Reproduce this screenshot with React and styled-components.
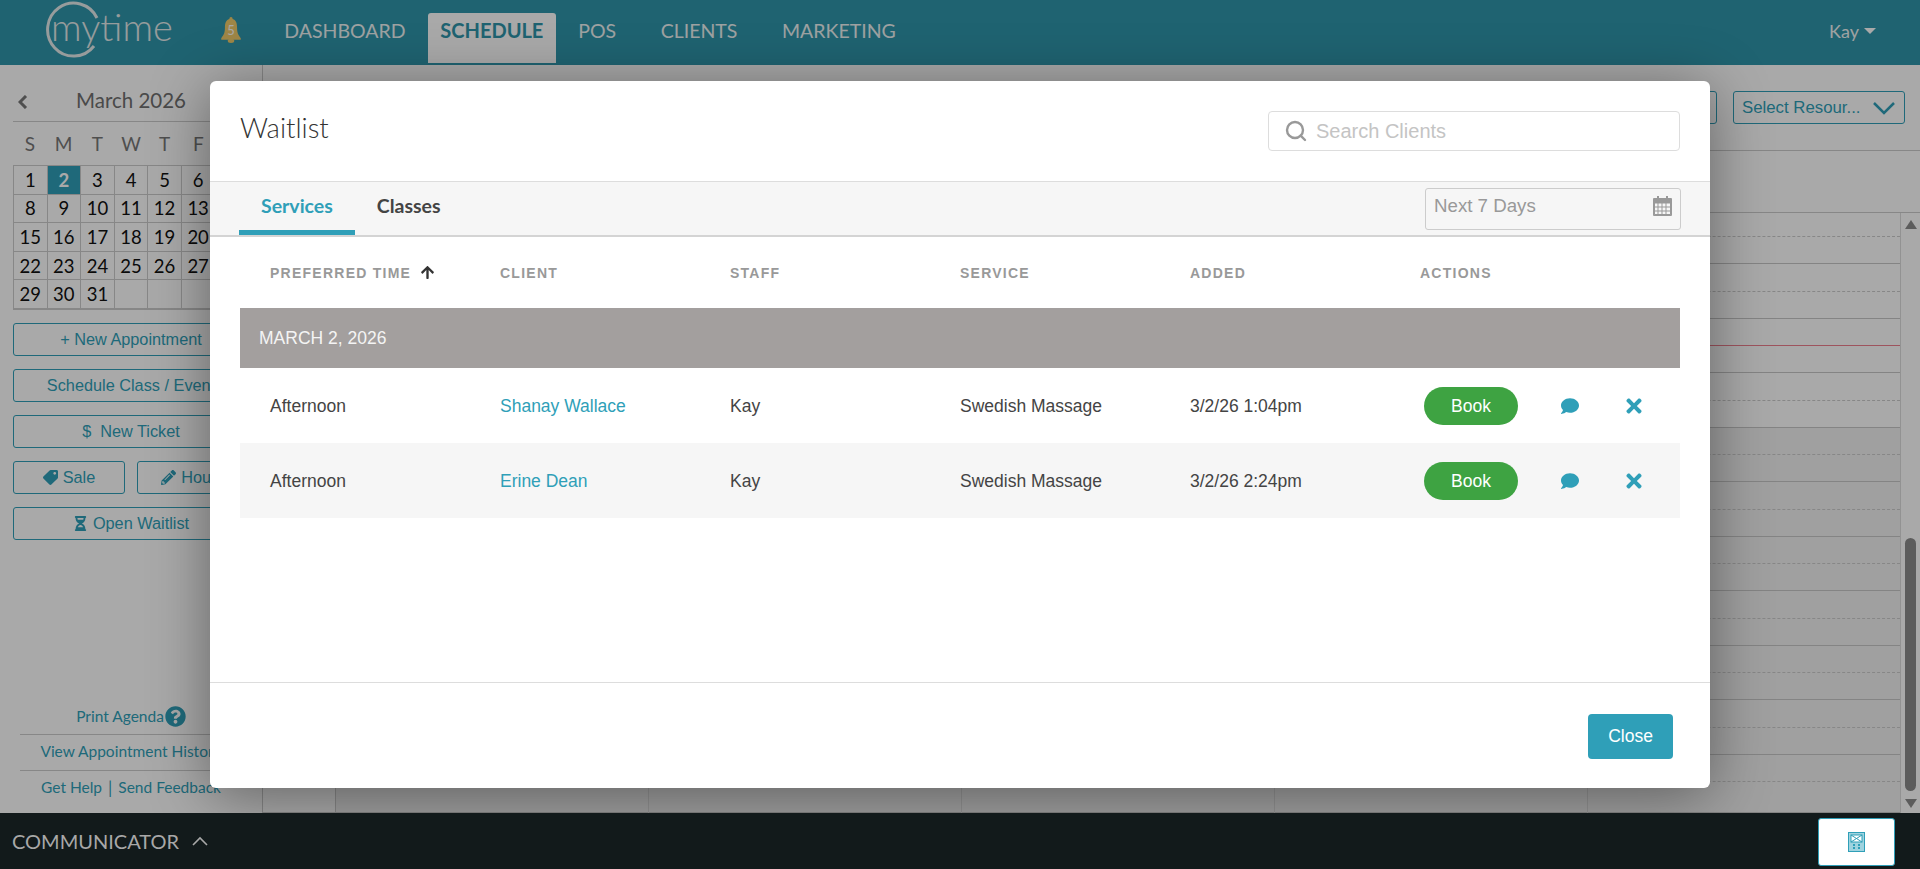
import React from 'react';
import styled, { createGlobalStyle } from 'styled-components';
import { FaTag, FaPencilAlt, FaHourglassHalf, FaComment, FaTimes, FaQuestionCircle, FaArrowUp } from 'react-icons/fa';
import { Search } from 'lucide-react';

const teal = '#2f9fb8';
const museo = '"Lato", "Open Sans", sans-serif';
const arial = '"Liberation Sans", Arial, sans-serif';

const navItems = ['DASHBOARD', 'SCHEDULE', 'POS', 'CLIENTS', 'MARKETING'];
const weekDays = ['S', 'M', 'T', 'W', 'T', 'F', 'S'];
const monthDays = [
  1, 2, 3, 4, 5, 6, 7, 8, 9, 10, 11, 12, 13, 14, 15, 16, 17, 18, 19, 20, 21, 22, 23, 24, 25, 26, 27, 28, 29, 30, 31, '',
  '', '', ''
];
const columns = ['Client', 'Staff', 'Service', 'Added', 'Actions'];
const waitlist = [
  { client: 'Shanay Wallace', added: '3/2/26 1:04pm' },
  { client: 'Erine Dean', added: '3/2/26 2:24pm' }
];
const slots = Array.from({ length: 22 }, (_, i) => i);

const GlobalStyle = createGlobalStyle`
  html, body {
    margin: 0;
    height: 100%;
    overflow: hidden;
    background: #fff;
    font-family: ${museo};
  }
  * {
    box-sizing: border-box;
  }
`;

const Page = styled.div`
  position: relative;
  height: 869px;
  display: flex;
  flex-direction: column;
  overflow: hidden;
`;

const Header = styled.header`
  height: 65px;
  flex: none;
  display: flex;
  background: #2f96ab;
`;

const Logo = styled.svg`
  width: 135px;
  height: 65px;
  margin-left: 42px;
  flex: none;
`;

const Bell = styled.svg`
  width: 22px;
  height: 26px;
  margin: 17px 0 0 43px;
  flex: none;
`;

const Nav = styled.nav`
  display: flex;
  margin-left: 20px;
  height: 50px;
  margin-top: 13px;
`;

const NavItem = styled.a`
  padding: 0 ${(p) => (p.$active ? '12.5px' : '22.3px')};
  line-height: 35px;
  font-size: ${(p) => (p.$active ? '20px' : '19.5px')};
  font-weight: ${(p) => (p.$active ? 700 : 400)};
  color: ${(p) => (p.$active ? '#2f96ab' : '#eef4f5')};
  background: ${(p) => (p.$active ? '#fff' : 'transparent')};
  border-radius: 3px 3px 0 0;
`;

const UserMenu = styled.div`
  margin-left: auto;
  height: 62px;
  padding-right: 44px;
  display: flex;
  align-items: center;
  gap: 5px;
  font-size: 18px;
  color: #eef4f5;
`;

const Caret = styled.span`
  width: 0;
  height: 0;
  border-left: 6px solid transparent;
  border-right: 6px solid transparent;
  border-top: 6px solid #fff;
`;

const Main = styled.main`
  flex: 1;
  display: flex;
  min-height: 0;
`;

const Sidebar = styled.aside`
  width: 263px;
  flex: none;
  padding: 0 13px;
  display: flex;
  flex-direction: column;
  border-right: 1px solid #ccc;
`;

const MonthBar = styled.div`
  height: 57px;
  flex: none;
  display: flex;
  align-items: center;
  justify-content: center;
  position: relative;
  padding-top: 13px;
  border-bottom: 1px solid #ccc;
  font-size: 20.5px;
  color: #707070;
`;

const PrevArrow = styled.svg`
  position: absolute;
  left: 5px;
  top: 30px;
  width: 10px;
  height: 14px;
`;

const WeekRow = styled.div`
  height: 43px;
  display: grid;
  grid-template-columns: repeat(7, 1fr);
  align-items: center;
  text-align: center;
  font-size: 19px;
  color: #777;
`;

const Days = styled.div`
  display: grid;
  grid-template-columns: repeat(7, 1fr);
  grid-auto-rows: 28.6px;
  border-top: 1px solid #ccc;
  border-left: 1px solid #ccc;
  border-bottom: 1px solid #ccc;
`;

const Day = styled.div`
  display: flex;
  align-items: center;
  justify-content: center;
  font-size: 18.5px;
  color: ${(p) => (p.$selected ? '#fff' : '#111')};
  font-weight: ${(p) => (p.$selected ? 700 : 400)};
  background: ${(p) => (p.$selected ? teal : 'transparent')};
  border-right: 1px solid #ccc;
  border-bottom: 1px solid #ccc;
`;

const Actions = styled.div`
  margin-top: 13px;
  display: flex;
  flex-direction: column;
  gap: 13px;
`;

const SideRow = styled.div`
  display: flex;
  gap: 12px;
  & > a {
    flex: 1 1 0;
  }
`;

const SideButton = styled.a`
  flex: none;
  height: 33px;
  display: flex;
  align-items: center;
  justify-content: center;
  gap: 5px;
  white-space: nowrap;
  font-family: ${arial};
  font-size: 16.3px;
  color: ${teal};
  border: 1px solid ${teal};
  border-radius: 3px;
  svg {
    font-size: 15px;
  }
`;

const FlippedTag = styled(FaTag)`
  transform: scaleX(-1);
`;

const SideLinks = styled.div`
  margin-top: auto;
  padding: 0 7px 7px;
`;

const SideLink = styled.div`
  height: 36px;
  display: flex;
  align-items: center;
  justify-content: center;
  gap: 1px;
  padding-bottom: ${(p) => (p.$first ? '0' : '3px')};
  font-size: 15.5px;
  color: ${teal};
  border-top: ${(p) => (p.$first ? 'none' : '1px solid #ccc')};
  white-space: nowrap;
  svg {
    font-size: 21px;
  }
`;

const Pipe = styled.span`
  margin: 0 5px;
  font-size: 17px;
`;

const Schedule = styled.section`
  flex: 1;
  min-width: 0;
  display: flex;
  flex-direction: column;
`;

const Toolbar = styled.div`
  height: 86px;
  flex: none;
  display: flex;
  justify-content: flex-end;
  gap: 16px;
  padding: 26px 15px 0 0;
  border-bottom: 1px solid #ccc;
`;

const ToolSelect = styled.div`
  width: ${(p) => p.$width}px;
  height: 33px;
  display: flex;
  align-items: center;
  justify-content: space-between;
  padding: 0 8px;
  font-family: ${arial};
  font-size: 16.8px;
  color: ${teal};
  border: 1px solid ${teal};
  border-radius: 3px;
`;

const DayHeader = styled.div`
  height: 62px;
  flex: none;
  border-bottom: 1px solid #ccc;
`;

const Grid = styled.div`
  flex: 1;
  min-height: 0;
  display: flex;
`;

const TimeColumn = styled.div`
  width: 73px;
  flex: none;
  border-right: 1px solid #ccc;
  border-bottom: 1px solid #ccc;
`;

const DayColumn = styled.div`
  flex: 1;
  display: flex;
  flex-direction: column;
  border-right: 1px solid #ddd;
`;

const Slot = styled.div`
  height: ${(p) => (p.$first ? '24px' : '27.25px')};
  flex: ${(p) => (p.$last ? '1' : 'none')};
  background: ${(p) => (p.$closed ? '#f1f1f1' : 'transparent')};
  border-bottom: 1px ${(p) => (p.$dashed ? 'dashed' : 'solid')} ${(p) => (p.$now ? '#ee7f8f' : p.$dashed ? '#ccc' : '#c8c8c8')};
`;

const Scrollbar = styled.div`
  width: 19px;
  flex: none;
  display: flex;
  flex-direction: column;
  align-items: center;
  padding: 7px 0 5px;
`;

const ScrollArrow = styled.span`
  width: 0;
  height: 0;
  border-left: 6.5px solid transparent;
  border-right: 6.5px solid transparent;
  ${(p) => (p.$down ? 'border-top: 9px solid #8c8c8c;' : 'border-bottom: 9px solid #8c8c8c;')}
`;

const Thumb = styled.div`
  width: 11px;
  height: 253px;
  margin: auto 0 8px;
  background: #8c8c8c;
  border-radius: 6px;
`;

const Backdrop = styled.div`
  position: absolute;
  inset: 0;
  display: flex;
  justify-content: center;
  align-items: flex-start;
  padding-top: 81px;
  background: rgba(0, 0, 0, 0.337);
`;

const Modal = styled.div`
  width: 1500px;
  height: 707px;
  display: flex;
  flex-direction: column;
  background: #fff;
  border-radius: 6px;
  box-shadow: 0 8px 60px rgba(0, 0, 0, 0.42);
`;

const ModalHeader = styled.div`
  height: 100px;
  flex: none;
  display: flex;
  align-items: flex-start;
  justify-content: space-between;
  padding: 30px 30px 0 30px;
`;

const Title = styled.h2`
  margin: 0;
  font-size: 27.5px;
  line-height: 34px;
  font-weight: 300;
  color: #333;
`;

const SearchBox = styled.div`
  width: 412px;
  height: 40px;
  display: flex;
  align-items: center;
  gap: 8px;
  padding-left: 15px;
  font-family: ${arial};
  font-size: 20px;
  color: #c4c4c4;
  border: 1px solid #ddd;
  border-radius: 4px;
  svg {
    color: #999;
  }
`;

const TabBar = styled.div`
  height: 56px;
  flex: none;
  display: flex;
  justify-content: space-between;
  padding: 0 29px 0 29px;
  background: #f6f6f6;
  border-top: 1px solid #ddd;
  border-bottom: 2px solid #d4d4d4;
`;

const Tabs = styled.div`
  display: flex;
`;

const Tab = styled.a`
  height: 53px;
  padding: 9px 22px 0;
  font-size: 19.5px;
  line-height: 30px;
  font-weight: 700;
  color: ${(p) => (p.$active ? teal : '#444')};
  border-bottom: 5px solid ${(p) => (p.$active ? teal : 'transparent')};
`;

const DateInput = styled.div`
  width: 256px;
  height: 42px;
  margin-top: 6px;
  display: flex;
  justify-content: space-between;
  padding: 5px 8px 0 8px;
  font-family: ${arial};
  font-size: 18.7px;
  line-height: 24px;
  color: #999;
  border: 1px solid #ccc;
  border-radius: 3px;
`;

const CalendarIcon = styled.svg`
  width: 19px;
  height: 20px;
  margin-top: 2px;
`;

const TableWrap = styled.div`
  flex: 1;
  min-height: 0;
  padding: 0 30px;
`;

const ColumnGrid = styled.div`
  display: grid;
  grid-template-columns: repeat(5, 230px) 1fr;
  padding-left: 30px;
  align-items: center;
`;

const TableHead = styled(ColumnGrid)`
  height: 71px;
`;

const HeadCell = styled.div`
  display: flex;
  align-items: center;
  gap: 9px;
  font-family: ${arial};
  font-size: 14px;
  font-weight: 700;
  letter-spacing: 1.25px;
  text-transform: uppercase;
  color: #999;
  svg {
    color: #333;
    font-size: 15px;
  }
`;

const GroupBar = styled.div`
  height: 60px;
  display: flex;
  align-items: center;
  padding-left: 19px;
  font-family: ${arial};
  font-size: 17.5px;
  color: #f4f4f4;
  background: #a39f9e;
`;

const Row = styled(ColumnGrid)`
  height: 75px;
  padding-top: 1px;
  font-family: ${arial};
  font-size: 17.5px;
  color: #444;
  background: ${(p) => (p.$striped ? '#f6f6f6' : '#fff')};
`;

const ClientLink = styled.a`
  color: ${teal};
`;

const RowActions = styled.div`
  display: flex;
  align-items: center;
  color: ${teal};
  padding-left: 4px;
`;

const BookButton = styled.button`
  width: 94px;
  height: 38px;
  padding: 0;
  margin-right: 43px;
  font-family: ${arial};
  font-size: 17.5px;
  color: #fff;
  background: #3ea342;
  border: none;
  border-radius: 19px;
`;

const ChatIcon = styled(FaComment)`
  font-size: 18px;
  margin-right: 44px;
`;

const RemoveIcon = styled(FaTimes)`
  font-size: 22px;
`;

const ModalFooter = styled.div`
  height: 106px;
  flex: none;
  display: flex;
  justify-content: flex-end;
  padding: 31px 37px 0 0;
  border-top: 1px solid #ddd;
`;

const CloseButton = styled.button`
  width: 85px;
  height: 45px;
  padding: 0;
  font-family: ${arial};
  font-size: 17.5px;
  color: #fff;
  background: ${teal};
  border: none;
  border-radius: 4px;
`;

const Communicator = styled.footer`
  position: relative;
  height: 56px;
  flex: none;
  display: flex;
  align-items: center;
  justify-content: space-between;
  padding: 0 25px 0 12px;
  background: #121a1b;
`;

const CommLabel = styled.div`
  display: flex;
  align-items: center;
  gap: 13px;
  font-size: 20px;
  color: #a8a8a8;
`;

const CommChevron = styled.svg`
  width: 16px;
  height: 10px;
`;

const CommTile = styled.div`
  width: 77px;
  height: 48px;
  margin-top: 2px;
  display: flex;
  align-items: center;
  justify-content: center;
  background: #fff;
  border: 1px solid ${teal};
  border-radius: 3px;
`;

const TileIcon = styled.svg`
  width: 17px;
  height: 20px;
`;

export default function App() {
  return (
    <Page>
      <GlobalStyle />
      <Header>
        <Logo viewBox="0 0 135 65">
          <path d="M55 18 A26 26.5 0 1 0 52 46" fill="none" stroke="#e4ebec" strokeWidth="3" />
          <text x="9" y="41" fontFamily={museo} fontWeight="300" fontSize="38" fill="#e4ebec">
            mytime
          </text>
        </Logo>
        <Bell viewBox="0 0 20 24">
          <path
            d="M10 0c1 0 1.5.7 1.5 1.8C15 3 15.6 6 15.6 10c0 5 1.4 7 3.4 9.5V21H1v-1.5C3 17 4.4 15 4.4 10 4.4 6 5 3 8.5 1.8 8.5.7 9 0 10 0z"
            fill="#efcb6a"
          />
          <ellipse cx="10" cy="22" rx="3" ry="2" fill="#efcb6a" />
          <text x="10" y="17" textAnchor="middle" fontFamily={museo} fontSize="12" fill="#fff">
            5
          </text>
        </Bell>
        <Nav>
          {navItems.map((item) => (
            <NavItem key={item} $active={item === 'SCHEDULE'}>
              {item}
            </NavItem>
          ))}
        </Nav>
        <UserMenu>
          Kay <Caret />
        </UserMenu>
      </Header>

      <Main>
        <Sidebar>
          <MonthBar>
            <PrevArrow viewBox="0 0 10 14">
              <path d="M8 1 2 7l6 6" fill="none" stroke="#777" strokeWidth="3" />
            </PrevArrow>
            March 2026
          </MonthBar>
          <WeekRow>
            {weekDays.map((d, i) => (
              <span key={i}>{d}</span>
            ))}
          </WeekRow>
          <Days>
            {monthDays.map((d, i) => (
              <Day key={i} $selected={d === 2}>
                {d}
              </Day>
            ))}
          </Days>
          <Actions>
            <SideButton>+ New Appointment</SideButton>
            <SideButton>Schedule Class / Event</SideButton>
            <SideButton>$&nbsp; New Ticket</SideButton>
            <SideRow>
              <SideButton>
                <FlippedTag /> Sale
              </SideButton>
              <SideButton>
                <FaPencilAlt /> Hours
              </SideButton>
            </SideRow>
            <SideButton>
              <FaHourglassHalf /> Open Waitlist
            </SideButton>
          </Actions>
          <SideLinks>
            <SideLink $first>
              Print Agenda <FaQuestionCircle />
            </SideLink>
            <SideLink>View Appointment History</SideLink>
            <SideLink>
              Get Help<Pipe>|</Pipe>Send Feedback
            </SideLink>
          </SideLinks>
        </Sidebar>

        <Schedule>
          <Toolbar>
            <ToolSelect $width={120}>Select Staff</ToolSelect>
            <ToolSelect $width={172}>
              Select Resour...
              <svg width="24" height="14" viewBox="0 0 24 14">
                <path d="M2 2l10 10L22 2" fill="none" stroke={teal} strokeWidth="2.5" />
              </svg>
            </ToolSelect>
          </Toolbar>
          <DayHeader />
          <Grid>
            <TimeColumn />
            {[0, 1, 2, 3, 4].map((col) => (
              <DayColumn key={col}>
                {slots.map((i) => (
                  <Slot
                    key={i}
                    $first={i === 0}
                    $last={i === slots.length - 1}
                    $dashed={i % 2 === 0 && i !== 4}
                    $now={i === 4}
                    $closed={i > 7}
                  />
                ))}
              </DayColumn>
            ))}
            <Scrollbar>
              <ScrollArrow />
              <Thumb />
              <ScrollArrow $down />
            </Scrollbar>
          </Grid>
        </Schedule>
      </Main>

      <Backdrop>
        <Modal>
          <ModalHeader>
            <Title>Waitlist</Title>
            <SearchBox>
              <Search size={24} strokeWidth={2.4} />
              Search Clients
            </SearchBox>
          </ModalHeader>
          <TabBar>
            <Tabs>
              <Tab $active>Services</Tab>
              <Tab>Classes</Tab>
            </Tabs>
            <DateInput>
              Next 7 Days
              <CalendarIcon viewBox="0 0 19 20">
                <path
                  d="M4 0h2v2h7V0h2v2h3a1 1 0 0 1 1 1v16a1 1 0 0 1-1 1H1a1 1 0 0 1-1-1V3a1 1 0 0 1 1-1h3z"
                  fill="#999"
                />
                <path
                  d="M1.5 7h16v11.5h-16zM5 7v11.5M9 7v11.5M13 7v11.5M1.5 11h16M1.5 15h16"
                  fill="#f6f6f6"
                  stroke="#999"
                  strokeWidth="1"
                />
              </CalendarIcon>
            </DateInput>
          </TabBar>
          <TableWrap>
            <TableHead>
              <HeadCell>
                Preferred Time <FaArrowUp />
              </HeadCell>
              {columns.map((c) => (
                <HeadCell key={c}>{c}</HeadCell>
              ))}
            </TableHead>
            <GroupBar>MARCH 2, 2026</GroupBar>
            {waitlist.map((item, i) => (
              <Row key={item.client} $striped={i % 2 === 1}>
                <div>Afternoon</div>
                <ClientLink>{item.client}</ClientLink>
                <div>Kay</div>
                <div>Swedish Massage</div>
                <div>{item.added}</div>
                <RowActions>
                  <BookButton>Book</BookButton>
                  <ChatIcon />
                  <RemoveIcon />
                </RowActions>
              </Row>
            ))}
          </TableWrap>
          <ModalFooter>
            <CloseButton>Close</CloseButton>
          </ModalFooter>
        </Modal>
      </Backdrop>

      <Communicator>
        <CommLabel>
          COMMUNICATOR
          <CommChevron viewBox="0 0 16 10">
            <path d="M1 9l7-7 7 7" fill="none" stroke="#a8a8a8" strokeWidth="1.6" />
          </CommChevron>
        </CommLabel>
        <CommTile>
          <TileIcon viewBox="0 0 17 20">
            <rect x="0.5" y="0.5" width="16" height="19" fill="#9fd3df" stroke={teal} />
            <rect x="3" y="3" width="11" height="7" fill="#fff" stroke={teal} />
            <path d="M3 3l11 7M14 3L3 10" stroke={teal} />
            <path d="M5 12h2v2H5zM10 12h2v2h-2zM5 15h2v2H5zM10 15h2v2h-2z" fill={teal} />
          </TileIcon>
        </CommTile>
      </Communicator>
    </Page>
  );
}
